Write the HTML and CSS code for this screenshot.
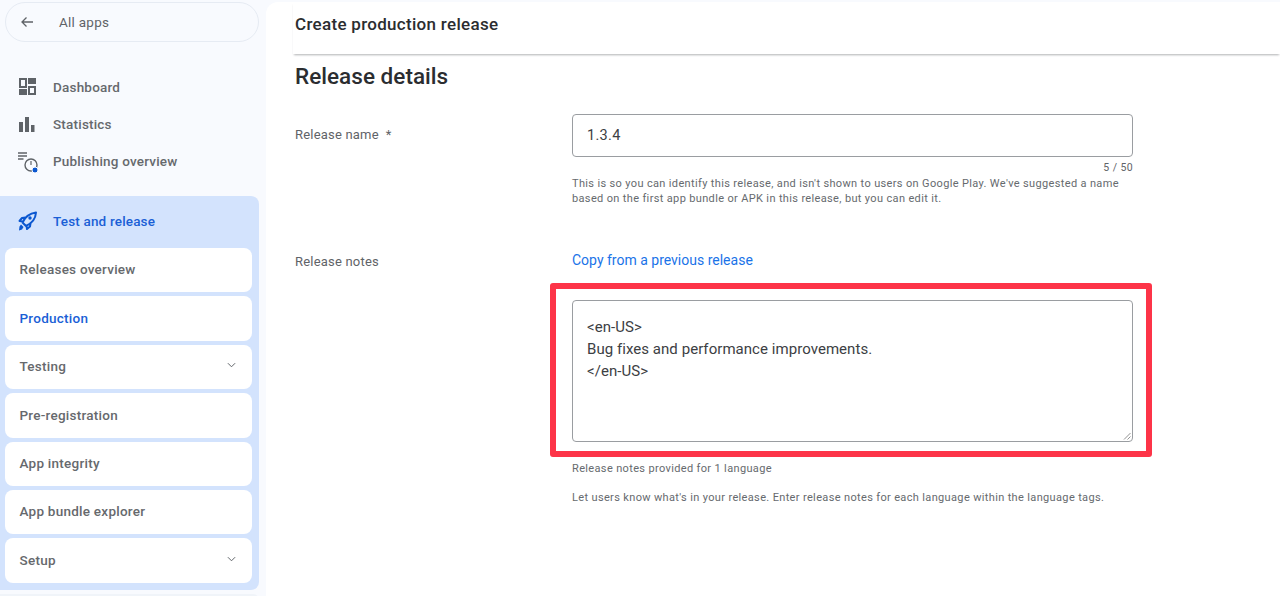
FILE: index.html
```html
<!DOCTYPE html>
<html lang="en">
<head>
<meta charset="utf-8">
<title>Create production release</title>
<link rel="stylesheet" href="styles.css">
</head>
<body>
<div class="app">
  <aside class="sidebar">
    <a class="all-apps">
      <svg class="back" viewBox="0 0 16 16" width="16" height="16"><path d="M14 8H3M7.500 3.500 3 8l4.500 4.500" fill="none" stroke="#5f6368" stroke-width="1.300"/></svg>
      <span>All apps</span>
    </a>
    <nav class="top-nav">
      <a class="top-item">
        <svg class="ico" viewBox="0 0 20 20" width="20" height="20"><path fill="#5f6368" d="M11 1h8v6h-8zM2 12h8v6H2z"/><path fill="none" stroke="#5f6368" stroke-width="2" d="M3 2h6v8H3zM12 10h6v7h-6z"/></svg>
        <span>Dashboard</span>
      </a>
      <a class="top-item">
        <svg class="ico" viewBox="0 0 20 20" width="20" height="20"><path fill="#5f6368" d="M2 8h4v10H2zM8 3h4v15H8zM14 11h3.500v7H14z"/></svg>
        <span>Statistics</span>
      </a>
      <a class="top-item">
        <svg class="ico" viewBox="0 0 20 20" width="20" height="20"><path fill="none" stroke="#5f6368" stroke-width="1.300" d="M1 2h9M1 5h9M1 8h5.500"/><circle cx="14" cy="14" r="6" fill="none" stroke="#5f6368" stroke-width="1.400"/><path fill="none" stroke="#5f6368" stroke-width="1.200" d="M14 10v4"/><circle cx="18" cy="19" r="3" fill="#0b57d0" stroke="#f8fafe"/></svg>
        <span>Publishing overview</span>
      </a>
    </nav>
    <section class="panel">
      <div class="panel-head">
        <svg class="ico" viewBox="0 0 20 20" width="20" height="20"><path fill="none" stroke="#0b57d0" stroke-width="2" stroke-linejoin="round" d="M7.500 13.500 5.500 11.500C8 6 12 2.500 19 1.500 18.500 8.500 14.500 12.500 9 15ZM6 10.500 2.500 10 5 7 8.500 6.500M9.500 14.500 10 18l3-2.500.5-3.500"/><circle cx="13" cy="7" r="1.700" fill="#0b57d0"/><path fill="#0b57d0" d="M4 13.500 6.500 16 5 18.500 2 19.500 2.500 15.500Z"/></svg>
        <span>Test and release</span>
      </div>
      <ul class="sub-list">
        <li class="sub-item">Releases overview</li>
        <li class="sub-item active">Production</li>
        <li class="sub-item">Testing<svg viewBox="0 0 10 6" width="9" height="6"><path d="M1 1l4 4 4-4" fill="none" stroke="#5f6368" stroke-width="1.100"/></svg></li>
        <li class="sub-item">Pre-registration</li>
        <li class="sub-item">App integrity</li>
        <li class="sub-item">App bundle explorer</li>
        <li class="sub-item">Setup<svg viewBox="0 0 10 6" width="9" height="6"><path d="M1 1l4 4 4-4" fill="none" stroke="#5f6368" stroke-width="1.100"/></svg></li>
      </ul>
    </section>
    <div class="next-panel"></div>
  </aside>
  <main class="main">
    <header class="page-head"><h1>Create production release</h1></header>
    <div class="content">
      <h2>Release details</h2>
      <div class="row row-name">
        <label class="row-label">Release name&nbsp; *</label>
        <div class="field">
          <div class="input">1.3.4</div>
          <div class="counter">5 / 50</div>
          <p class="help">This is so you can identify this release, and isn't shown to users on Google Play. We've suggested a name based on the first app bundle or APK in this release, but you can edit it.</p>
        </div>
      </div>
      <div class="row row-notes">
        <label class="row-label">Release notes</label>
        <div class="field">
          <a class="copy-link">Copy from a previous release</a>
          <div class="notes-wrap">
            <div class="textarea">
              <div>&lt;en-US&gt;</div>
              <div>Bug fixes and performance improvements.</div>
              <div>&lt;/en-US&gt;</div>
              <svg class="grip" viewBox="0 0 8 8" width="8" height="8"><path d="M7.500 1 1 7.500M7.500 4.500 4.500 7.500" stroke="#777" stroke-width=".8" fill="none"/></svg>
            </div>
            <div class="highlight"></div>
          </div>
          <p class="help provided">Release notes provided for 1 language</p>
          <p class="help tags">Let users know what's in your release. Enter release notes for each language within the language tags.</p>
        </div>
      </div>
    </div>
  </main>
</div>
</body>
</html>
```
FILE: styles.css
```css
* { box-sizing: border-box; }
html, body { margin: 0; height: 100%; overflow: hidden; }
body { background: #f8fafe; font-family: Roboto, "Liberation Sans", sans-serif; color: #202124; }
.app { display: flex; height: 596px; }
.ico { overflow: visible; flex: none; }

.sidebar { width: 266px; flex: none; padding-top: 2px; }
.all-apps { display: flex; align-items: center; margin-left: 5px; width: 254px; height: 40px; padding-left: 13px; border: 1.5px solid #e6ebf3; border-radius: 20px; font-size: 13.500px; color: #5f6368; letter-spacing: .25px; }
.all-apps span { margin-left: 24px; }
.back { flex: none; }

.top-nav { display: flex; flex-direction: column; gap: 17px; padding: 35px 0 0 17px; }
.top-item { display: flex; align-items: center; gap: 16px; height: 20px; font-size: 13.500px; font-weight: 500; color: #66696d; letter-spacing: .2px; }

.panel { margin-top: 25px; width: 259px; height: 394px; padding: 0 7px 0 5px; background: #d3e3fd; border-radius: 0 8px 8px 0; }
.panel-head { display: flex; align-items: center; gap: 16px; height: 50px; margin-bottom: 2px; padding-left: 12px; font-size: 13.500px; font-weight: 500; color: #1a5fd6; letter-spacing: .17px; }
.sub-list { display: flex; flex-direction: column; gap: 4px; margin: 0; padding: 0; list-style: none; }
.sub-item { display: flex; align-items: center; justify-content: space-between; height: 44.400px; padding: 0 16px 1.500px 14.500px; background: #fff; border-radius: 8px; font-size: 13.500px; font-weight: 500; color: #66696d; letter-spacing: .25px; }
.sub-item svg { margin-bottom: 2px; }
.sub-item.active { color: #1a5fd6; }
.next-panel { margin-top: 4px; width: 259px; height: 6px; background: #f0f4f9; border-top-right-radius: 8px; }

.main { flex: 1; margin-top: 2px; background: #fff; border-top-left-radius: 12px; }
.page-head { height: 52px; margin-left: 27px; padding: 12px 0 0 2px; box-shadow: 0 2px 2px -1px rgba(60,64,67,.4); }
h1 { margin: 0; font-size: 17px; font-weight: 500; line-height: 20px; letter-spacing: .3px; color: #2b2d30; }
.content { padding: 9px 0 0 29px; }
h2 { margin: 0; font-size: 22.500px; font-weight: 500; line-height: 26px; letter-spacing: .03px; color: #2b2d30; }
.row { display: flex; }
.row-name { margin-top: 25px; }
.row-notes { margin-top: 46px; }
.row-label { width: 277px; flex: none; font-size: 13px; color: #5f6368; letter-spacing: .2px; line-height: 16px; }
.row-name .row-label { padding-top: 13px; }
.row-notes .row-label { padding-top: 2px; }
.field { width: 561px; }
.input { height: 43px; padding: 11px 14px; border: 1px solid #9a9da1; border-radius: 4px; font-size: 14.500px; line-height: 20px; color: #3c4043; letter-spacing: .3px; }
.counter { margin-top: 5px; text-align: right; font-size: 10.500px; line-height: 12px; color: #5f6368; letter-spacing: .4px; }
.help { margin: 0; font-size: 11px; line-height: 15px; color: #666a6e; letter-spacing: .35px; }
.row-name .help { margin-top: 2px; }
.copy-link { display: block; font-size: 14px; line-height: 16px; color: #1a73e8; }

.notes-wrap { position: relative; margin-top: 32px; }
.textarea { position: relative; height: 142px; padding: 14.500px 14px; border: 1px solid #9a9da1; border-radius: 4px; font-size: 15px; line-height: 22px; letter-spacing: .05px; color: #3c4043; }
.grip { position: absolute; right: 1px; bottom: 1px; }
.highlight { position: absolute; top: -17px; right: -19px; bottom: -15px; left: -22px; border: 6px solid #fd3448; border-radius: 3px; pointer-events: none; }
.provided { margin-top: 19px; }
.tags { margin-top: 14px; }
```
